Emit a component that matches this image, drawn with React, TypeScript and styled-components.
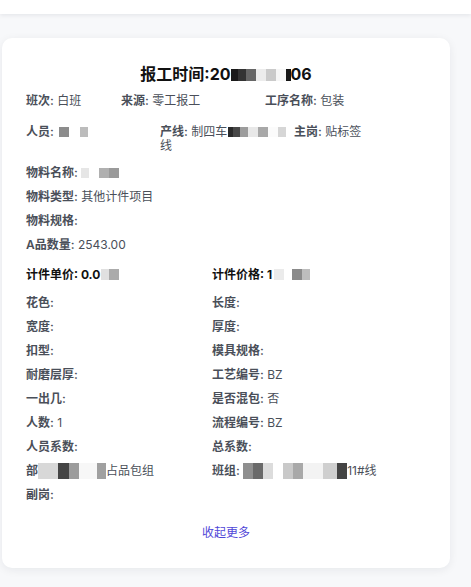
import React from 'react';
import styled, { createGlobalStyle } from 'styled-components';

const GlobalStyle = createGlobalStyle`
  html, body {
    margin: 0;
    padding: 0;
    background: #f7f8fa;
  }
  body {
    font-family: Inter, "Noto Sans CJK SC", "Liberation Sans", sans-serif;
    -webkit-font-smoothing: antialiased;
  }
`;

const Page = styled.div`
  min-height: 587px;
  background: #f7f8fa;
  overflow: hidden;
`;

const TopBar = styled.header`
  height: 14px;
  background: #ffffff;
  box-shadow: 0 1px 5px rgba(15, 23, 42, 0.09);
`;

const Card = styled.section`
  margin: 24px 21px 0 2px;
  padding: 24px 24px 25px;
  background: #ffffff;
  border-radius: 10px;
  box-shadow: 0 2px 10px rgba(15, 23, 42, 0.07);
`;

const Title = styled.h2`
  margin: 0;
  font-size: 16px;
  line-height: 24px;
  font-weight: 700;
  color: #111111;
  text-align: center;
  white-space: nowrap;
`;

const HeaderRow = styled.div<{ $top: number }>`
  display: flex;
  align-items: flex-start;
  margin-top: ${(p) => p.$top}px;
  font-size: 12px;
  line-height: 14px;
`;

const HeaderItem = styled.div<{ $w?: number }>`
  flex: ${(p) => (p.$w ? `0 0 ${p.$w}px` : '1 1 auto')};
  min-width: 0;
`;

const FieldList = styled.div`
  margin-top: 8px;
  font-size: 12px;
  line-height: 24px;
`;

const FieldRow = styled.div`
  white-space: nowrap;
`;

const PriceRow = styled.div`
  display: grid;
  grid-template-columns: 186px 1fr;
  margin: 6px 0 4px;
  font-size: 12px;
  line-height: 24px;
  font-weight: 700;
  color: #111111;
  white-space: nowrap;
`;

const DetailGrid = styled.div`
  display: grid;
  grid-template-columns: 186px 1fr;
  font-size: 12px;
  line-height: 24px;
`;

const Cell = styled.div`
  white-space: nowrap;
`;

const Label = styled.span<{ $strong?: boolean }>`
  font-weight: ${(p) => (p.$strong ? 700 : 600)};
  color: ${(p) => (p.$strong ? '#111111' : '#4a4f59')};
`;

const Value = styled.span<{ $strong?: boolean }>`
  font-weight: ${(p) => (p.$strong ? 700 : 400)};
  color: ${(p) => (p.$strong ? '#111111' : '#4a4f59')};
`;

const MoreLink = styled.button`
  display: block;
  width: 100%;
  margin: 0;
  padding: 16px 0 0;
  border: 0;
  background: none;
  font-family: inherit;
  font-size: 12px;
  line-height: 20px;
  color: #4f46d8;
  text-align: center;
  cursor: pointer;
`;

/* pixelated privacy mask */
const MaskStrip = styled.span<{ $h: number; $gap: number }>`
  display: inline-flex;
  height: ${(p) => p.$h}px;
  margin-left: ${(p) => p.$gap}px;
  vertical-align: middle;
  position: relative;
  top: -1px;
`;

const MaskCell = styled.span<{ $c: string; $w: number }>`
  display: block;
  width: ${(p) => p.$w}px;
  height: 100%;
  background: ${(p) => p.$c};
`;

type Tile = [string, number];

const Mask = ({ tiles, h = 10, gap = 0 }: { tiles: Tile[]; h?: number; gap?: number }) => (
  <MaskStrip $h={h} $gap={gap}>
    {tiles.map(([c, w], i) => (
      <MaskCell key={i} $c={c} $w={w} />
    ))}
  </MaskStrip>
);

const Field = ({
  label,
  children,
  strong,
}: {
  label: React.ReactNode;
  children?: React.ReactNode;
  strong?: boolean;
}) => (
  <>
    <Label $strong={strong}>{label}:</Label>{' '}
    <Value $strong={strong}>{children}</Value>
  </>
);

const titleMask: Tile[] = [
  ['#1a1a1a', 7],
  ['#333333', 8],
  ['#666666', 10],
  ['#ececec', 10],
  ['#cacaca', 10],
  ['#f6f6f6', 10],
  ['#151515', 5],
];

const personMask: Tile[] = [
  ['#8c8c8c', 10],
  ['transparent', 11],
  ['#bcbcbc', 8],
];

const lineMask: Tile[] = [
  ['#2a2a2a', 5],
  ['#474747', 7],
  ['#9c9c9c', 8],
  ['#e8e8e8', 10],
  ['#a8a8a8', 10],
  ['#fbfbfb', 10],
  ['#d6d6d6', 8],
];

const materialMask: Tile[] = [
  ['#e6e6e6', 8],
  ['#ffffff', 10],
  ['#b0b0b0', 10],
  ['#9a9a9a', 10],
];

const unitMask: Tile[] = [
  ['#e0e0e0', 8],
  ['#ababab', 10],
];

const priceMask: Tile[] = [
  ['#ebebeb', 10],
  ['#ffffff', 8],
  ['#8a8a8a', 10],
  ['#bdbdbd', 8],
];

const deptMask: Tile[] = [
  ['#d8d8d8', 20],
  ['#454545', 11],
  ['#9c9c9c', 10],
  ['#f7f7f7', 18],
  ['#a0a0a0', 9],
];

const teamMask: Tile[] = [
  ['#8f8f8f', 10],
  ['#6a6a6a', 10],
  ['#dcdcdc', 10],
  ['#ffffff', 10],
  ['#c9c9c9', 10],
  ['#a9a9a9', 10],
  ['#f3f3f3', 20],
  ['#cfcfcf', 14],
  ['#444444', 10],
];

const details: [React.ReactNode, React.ReactNode][] = [
  [<Field label="花色" />, <Field label="长度" />],
  [<Field label="宽度" />, <Field label="厚度" />],
  [<Field label="扣型" />, <Field label="模具规格" />],
  [<Field label="耐磨层厚" />, <Field label="工艺编号">BZ</Field>],
  [<Field label="一出几" />, <Field label="是否混包">否</Field>],
  [<Field label="人数">1</Field>, <Field label="流程编号">BZ</Field>],
  [<Field label="人员系数" />, <Field label="总系数" />],
  [
    <>
      <Label>部</Label>
      <Mask tiles={deptMask} h={16} />
      <Value>占品包组</Value>
    </>,
    <Field label="班组">
      <Mask tiles={teamMask} h={16} />
      11#线
    </Field>,
  ],
  [<Field label="副岗" />, null],
];

export default function App() {
  return (
    <Page>
      <GlobalStyle />
      <TopBar />
      <Card>
        <Title>
          报工时间:20
          <Mask tiles={titleMask} h={12} />
          06
        </Title>

        <HeaderRow $top={8}>
          <HeaderItem $w={95}>
            <Field label="班次">白班</Field>
          </HeaderItem>
          <HeaderItem $w={144}>
            <Field label="来源">零工报工</Field>
          </HeaderItem>
          <HeaderItem>
            <Field label="工序名称">包装</Field>
          </HeaderItem>
        </HeaderRow>

        <HeaderRow $top={17}>
          <HeaderItem $w={134}>
            <Field label="人员">
              <Mask tiles={personMask} gap={2} />
            </Field>
          </HeaderItem>
          <HeaderItem $w={134}>
            <Field label="产线">
              制四车
              <Mask tiles={lineMask} gap={1} />
              线
            </Field>
          </HeaderItem>
          <HeaderItem>
            <Field label="主岗">贴标签</Field>
          </HeaderItem>
        </HeaderRow>

        <FieldList>
          <FieldRow>
            <Field label="物料名称">
              <Mask tiles={materialMask} />
            </Field>
          </FieldRow>
          <FieldRow>
            <Field label="物料类型">其他计件项目</Field>
          </FieldRow>
          <FieldRow>
            <Field label="物料规格" />
          </FieldRow>
          <FieldRow>
            <Field label="A品数量">2543.00</Field>
          </FieldRow>
        </FieldList>

        <PriceRow>
          <Cell>
            <Field label="计件单价" strong>
              0.0
              <Mask tiles={unitMask} h={11} gap={1} />
            </Field>
          </Cell>
          <Cell>
            <Field label="计件价格" strong>
              1
              <Mask tiles={priceMask} h={11} gap={2} />
            </Field>
          </Cell>
        </PriceRow>

        <DetailGrid>
          {details.map(([left, right], i) => (
            <React.Fragment key={i}>
              <Cell>{left}</Cell>
              <Cell>{right}</Cell>
            </React.Fragment>
          ))}
        </DetailGrid>

        <MoreLink type="button">收起更多</MoreLink>
      </Card>
    </Page>
  );
}
